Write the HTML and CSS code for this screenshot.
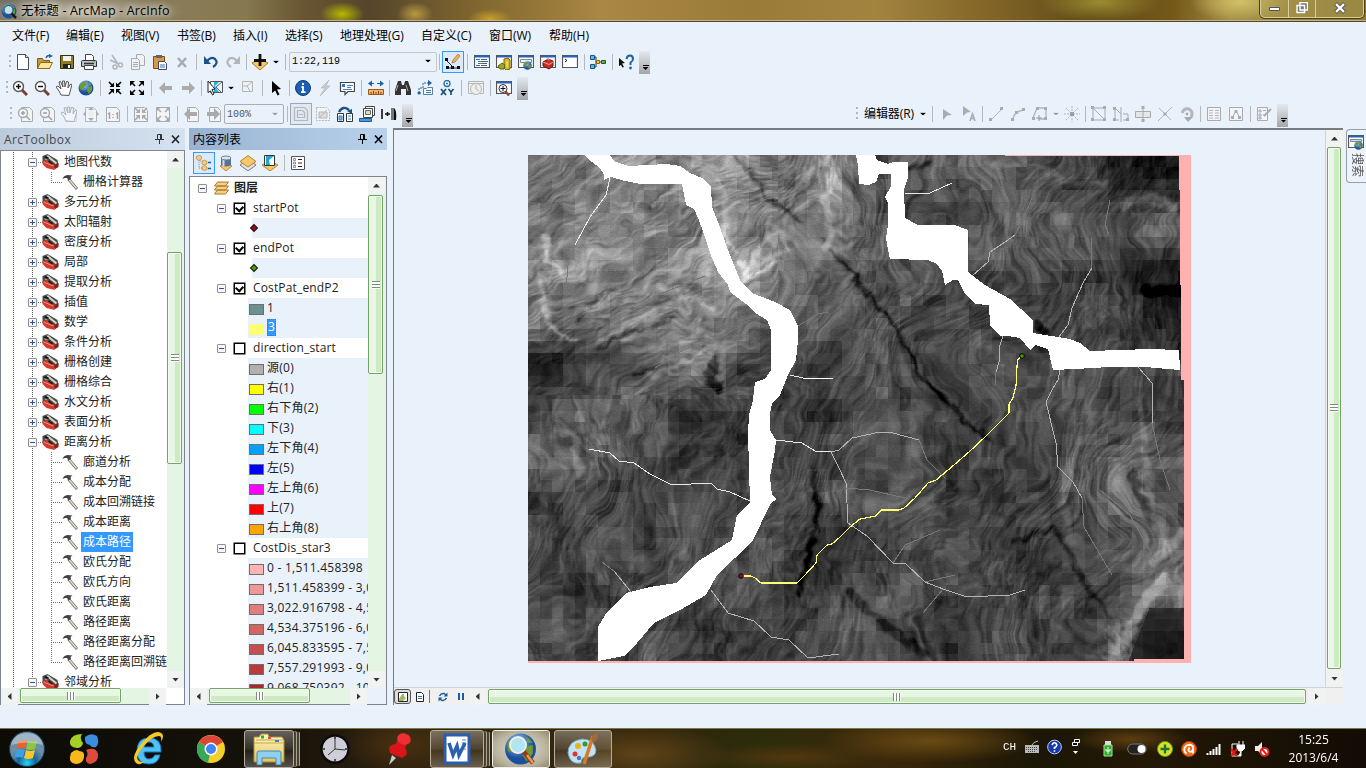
FILE: index.html
```html
<!DOCTYPE html>
<html lang="zh-CN">
<head>
<meta charset="utf-8">
<title>无标题 - ArcMap - ArcInfo</title>
<link rel="stylesheet" href="styles.css">
</head>
<body>
<svg class="defs" width="0" height="0">
  <defs>
    <radialGradient id="gGlobe" cx=".4" cy=".3"><stop offset="0" stop-color="#9fd0f5"/><stop offset="1" stop-color="#1b4f9c"/></radialGradient>
    <radialGradient id="gOrb" cx=".5" cy=".9"><stop offset="0" stop-color="#28d4f8"/><stop offset=".5" stop-color="#17659d"/><stop offset="1" stop-color="#6d8ea5"/></radialGradient>
    <linearGradient id="gFold" x1="0" y1="0" x2="0" y2="1"><stop offset="0" stop-color="#fff7c4"/><stop offset="1" stop-color="#e3c45e"/></linearGradient>
  </defs>
  <symbol id="globe" viewBox="0 0 16 16"><circle cx="8" cy="8" r="7.5" fill="url(#gGlobe)"/><path d="M2 5q3-4 6-3l1 3-3 2-1 3-3-1zM10 7l4-1v4l-3 4-2-3zM11 2l3 3-3 0z" fill="#6f9a35"/></symbol>
  <symbol id="box" viewBox="0 0 16 16"><path d="M0 2 5 0l10 6 1 5-4 3-6-2L0 8z" fill="#4a4a4a"/><path d="m0 7 4-.5 8 4.500v5l-8-2-4-4z" fill="#d23a2c"/><path d="m1 8 10 4" stroke="#f28b7a"/><path d="m12 11 4-2v4l-4 2.500z" fill="#8e1e18"/><path d="m5 2 9 7.500" stroke="#ddd6c6" stroke-width="2"/><path d="m2 3 4 1M6 7l4 3" stroke="#161616" stroke-width="1.500"/><path d="M2 5l3 1M4 1l2 .5" stroke="#a5a5a5"/></symbol>
  <symbol id="ham" viewBox="0 0 16 16"><path d="m6 5 8.500 10" stroke="#6b665a" stroke-width="2.800"/><path d="m6.500 5.500 7.600 9" stroke="#e6dec8" stroke-width="1.500"/><path d="M0 5q1-3.500 5-4l5 .5-2 1.500.5 2L6 6.500 4.500 4Q2 3.500 0 5z" fill="#444"/></symbol>
  <symbol id="mag" viewBox="0 0 16 16"><path d="m10 10 5 5" stroke="#7b3f35" stroke-width="3"/><circle cx="6.500" cy="6.500" r="5" fill="#fff" stroke="#555" stroke-width="1.400"/></symbol>
  <symbol id="hand" viewBox="0 0 16 16"><path d="m5 15-2-4-3-4 2-1 3 3-2-7 1.500-.5L7 7 6.500 1h2L9 7l1.500-5.500 2 .5L12 8l2.500-4 1.500.5L14 12l-1 3.500z" fill="#fff" stroke="#555"/></symbol>
  <symbol id="win" viewBox="0 0 16 16"><path d="M.5 1.500h15v12H.5z" fill="#fff" stroke="#555" stroke-width="1.200"/><path d="M1 2.500h14" stroke="#2463b8" stroke-width="2"/></symbol>
  <symbol id="in4" viewBox="0 0 16 16"><path d="M2 2l4 4M14 2l-4 4M2 14l4-4M14 14l-4-4" stroke="currentColor" stroke-width="1.700"/><path d="M7 2.500V7H2.500zM9 2.500V7h4.500zM7 13.500V9H2.500zM9 13.500V9h4.500z" fill="currentColor"/></symbol>
  <symbol id="out4" viewBox="0 0 16 16"><path d="M2 2l4 4M14 2l-4 4M2 14l4-4M14 14l-4-4" stroke="currentColor" stroke-width="1.500"/><path d="M1 6V1h5zM15 6V1h-5zM1 10v5h5zM15 10v5h-5z" fill="currentColor"/></symbol>
  <symbol id="page" viewBox="0 0 16 16"><path d="M4.500 1.500h8l3 3v11h-11z" fill="#f2f4f7" stroke="#a9abad"/></symbol>
  <symbol id="left" viewBox="0 0 16 16"><path d="M1 8 7 2v4h7v4H7v4z" fill="#a8aaac"/></symbol>
  <symbol id="right" viewBox="0 0 16 16"><path d="M15 8 9 2v4H2v4h7v4z" fill="#a8aaac"/></symbol>
  <symbol id="ptr" viewBox="0 0 16 16"><path d="m4 1 9 8-4 .5 2.500 5-2 1-2.300-5L4 13z" fill="currentColor"/></symbol>
</svg>

<header class="title">
  <svg class="appicon" viewBox="0 0 16 16"><use href="#globe"/><path d="m10 10 5 5" stroke="#181818" stroke-width="2.500"/><circle cx="7.500" cy="7" r="4.500" fill="#d9f2ff" fill-opacity=".8" stroke="#0c4b78"/></svg>
  <span class="title-text">无标题 - ArcMap - ArcInfo</span>
  <div class="winbtns">
    <span class="wb"><svg width="12" height="12"><path d="M1.500 5.500h10v3h-10z" fill="#fff" stroke="#555"/></svg></span>
    <span class="wb"><svg width="12" height="12"><path d="M4 .5h7.500V8H4zM1 3.500h7.500v7H1z" fill="#777" stroke="#fff" stroke-width="1.400"/></svg></span>
    <span class="wb wide"><svg width="12" height="12"><path d="m1.500 1.500 9 9m0-9-9 9" stroke="#555" stroke-width="4"/><path d="m2 2 8 8m0-8-8 8" stroke="#fff" stroke-width="2.400"/></svg></span>
  </div>
</header>

<nav class="menu">
  <span class="m1">文件(F)</span><span class="m2">编辑(E)</span><span class="m3">视图(V)</span><span class="m4">书签(B)</span><span class="m5">插入(I)</span><span class="m6">选择(S)</span><span class="m7">地理处理(G)</span><span class="m8">自定义(C)</span><span class="m9">窗口(W)</span><span>帮助(H)</span>
</nav>

<div class="bar bar1">
  <i class="grip"></i>
  <svg class="i" viewBox="0 0 16 16"><path d="M2.500.5h8l3 3v12h-11z" fill="#fff" stroke="#4a4f55"/><path d="M10.500.5v3h3" fill="#cfe0f4" stroke="#4a4f55"/></svg>
  <svg class="i" viewBox="0 0 16 16"><path d="M.5 14.500v-10h5l1 2h6v8z" fill="#c59b3a" stroke="#7a5c17"/><path d="m.5 14.500 3-6h12l-3 6z" fill="#ffe69b" stroke="#8a6a1d"/><path d="M9 4q1-3 4-2.500" fill="none" stroke="#1c62a5" stroke-width="1.500"/><path d="m12 0 4 2-4 2z" fill="#1c62a5"/></svg>
  <svg class="i" viewBox="0 0 16 16"><path d="M1.500 1.500h13v13h-13z" fill="#8c7a1c" stroke="#33300f"/><path d="M4 2h8v5H4z" fill="#f1f1f1"/><path d="M4 10h8v4H4z" fill="#222"/><path d="M9 11h2v3H9z" fill="#fff"/></svg>
  <svg class="i" viewBox="0 0 16 16"><path d="M4.500 7V.5h6l2 2V7" fill="#fff" stroke="#444"/><path d="M.5 7.500q0-1 1-1h13q1 0 1 1v5H.5z" fill="#bfc2c5" stroke="#333"/><path d="M3 9.500h10" stroke="#333" stroke-width="1.500"/><path d="M3.500 11.500h9v4h-9z" fill="#fff" stroke="#444"/><path d="M12 8h2" stroke="#4c4"/></svg>
  <i class="sep s5"></i>
  <svg class="i" viewBox="0 0 16 16" fill="none" stroke="#b4b6b8" stroke-width="1.600"><path d="M4 1l6 9M2 6l9 4"/><circle cx="7" cy="13" r="2"/><circle cx="12.500" cy="11" r="2"/></svg>
  <svg class="i" viewBox="0 0 16 16"><path d="M6.500.5h6l2 2v9h-8z" fill="#eef1f5" stroke="#a9abad"/><path d="M1.500 4.500h6l2 2v9h-8z" fill="#eef1f5" stroke="#a9abad"/><path d="M3 8.500h5M3 10.500h5M3 12.500h5" stroke="#a9abad"/></svg>
  <svg class="i" viewBox="0 0 16 16"><path d="M1.500 2.500h11v12h-11z" fill="#d79a4a" stroke="#7a4d16"/><path d="M4 1h6v3H4z" fill="#666"/><path d="M6.500 7.500h6l2 2v6h-8z" fill="#fff" stroke="#446"/><path d="M8 11h5M8 13h5" stroke="#2d6cb5"/></svg>
  <svg class="i" viewBox="0 0 16 16"><path d="m4 4 8 9M12 4l-8 9" stroke="#a9abad" stroke-width="2.500"/></svg>
  <i class="sep s7"></i>
  <svg class="i" viewBox="0 0 16 16"><path d="M4 7q4-5 8-2 4 4-2 8" fill="none" stroke="#1b5187" stroke-width="2.200"/><path d="M1 2v8h7z" fill="#1b5187"/></svg>
  <svg class="i" viewBox="0 0 16 16"><path d="M12 7Q8 2 4 5q-4 4 2 8" fill="none" stroke="#b3b6b9" stroke-width="2.200"/><path d="M15 2v8H8z" fill="#b3b6b9"/></svg>
  <i class="sep s5"></i>
  <svg class="i" viewBox="0 0 16 16"><path d="m0 9 8-4 8 4-8 7z" fill="#f5c96b" stroke="#a77a28"/><path d="M8 0v12M2 6.500h12" stroke="#111" stroke-width="2.800"/></svg>
  <i class="dd w10"></i><i class="sep s8"></i>
  <span class="combo scale">1:22,119<i class="dd"></i></span>
  <i class="sep s5"></i>
  <span class="btn"><svg class="i" viewBox="0 0 16 16"><path d="m1 6 6 6M2 14h13" stroke="#222" fill="none"/><path d="M0 4h3v3H0zM1 12h3v3H1zM6 12h3v3H6zM12 12h3v3h-3z" fill="#111"/><path d="m7 9 1-3 5-6 2 2-5 6z" fill="#f1b35a" stroke="#8a5a20" stroke-width=".6"/></svg></span>
  <i class="sep s7"></i>
  <svg class="i" viewBox="0 0 16 16"><use href="#win"/><path d="M2 5.500h4M4 7.500h3M4 9.500h3M2 11.500h4" stroke="#1a75c8"/><path d="M7 5.500h6M8 7.500h6M8 9.500h5M7 11.500h6" stroke="#43618a"/><path d="M6 7.500h2" stroke="#d33"/><path d="M6 9.500h2" stroke="#3a3"/></svg>
  <svg class="i" viewBox="0 0 16 16"><use href="#win"/><path d="M8 5l4-1 2 2v9l-4 1-2-2z" fill="#d6b918" stroke="#7a6808"/><path d="m2 12 4-3 3 2-1 4-4 0z" fill="#9aa635" stroke="#5c6412"/><path d="M11 7v6" stroke="#fff3a0"/></svg>
  <svg class="i" viewBox="0 0 16 16"><use href="#win"/><path d="M2.500 5.500h11v3h-11z" fill="#eee" stroke="#888"/><svg x="5" y="7" width="9" height="9"><use href="#globe"/></svg></svg>
  <svg class="i" viewBox="0 0 16 16"><use href="#win"/><path d="m3 8 5-3 5 2v5l-4 3-6-3z" fill="#c62d25" stroke="#6a100c"/><path d="m3 8 6 2.500L13 8M6 5h3v1.500" fill="none" stroke="#f3a196"/></svg>
  <svg class="i" viewBox="0 0 16 16"><use href="#win"/><path d="m3 5 2 1.500L3 8" fill="none" stroke="#222"/></svg>
  <i class="sep s6"></i>
  <svg class="i" viewBox="0 0 16 16"><path d="M4 3h2v10H4M6 8h6" fill="none" stroke="#333"/><path d="M.5 1.500h4v4h-4zM.5 10.500h4v4h-4z" fill="#58b8e8" stroke="#17548c"/><path d="M6.500 6.500h3v3h-3z" fill="#f2c94c" stroke="#8b641a"/><path d="M11.500 6.500h4v3h-4z" fill="#5eb04b" stroke="#245b1a"/></svg>
  <i class="sep s6"></i>
  <svg class="i" viewBox="0 0 16 16"><path d="m1 4 6 5-3 .5L6 13l-1.500.5L3 11l-2 1z" fill="#111"/><path d="M8.500 5Q9 1.500 12 1.500T15 5q0 2-2.500 3.500V11" fill="none" stroke="#21639e" stroke-width="2"/><circle cx="12.500" cy="14" r="1.400" fill="#21639e"/></svg>
  <i class="more"></i>
</div>

<div class="bar bar2">
  <i class="grip"></i>
  <svg class="i" viewBox="0 0 16 16"><use href="#mag"/><path d="M6.500 4v5M4 6.500h5" stroke="#111" stroke-width="1.500"/></svg>
  <svg class="i" viewBox="0 0 16 16"><use href="#mag"/><path d="M4 6.500h5" stroke="#111" stroke-width="1.500"/></svg>
  <svg class="i" viewBox="0 0 16 16"><use href="#hand"/></svg>
  <svg class="i" viewBox="0 0 16 16"><use href="#globe"/></svg>
  <i class="sep s7"></i>
  <svg class="i" viewBox="0 0 16 16"><use href="#in4"/></svg>
  <svg class="i" viewBox="0 0 16 16"><use href="#out4"/></svg>
  <i class="sep s7"></i>
  <svg class="i" viewBox="0 0 16 16"><use href="#left"/></svg>
  <svg class="i" viewBox="0 0 16 16"><use href="#right"/></svg>
  <i class="sep s5"></i>
  <svg class="i" viewBox="0 0 16 16"><path d="M3.500 1.500h12v11h-12z" fill="#eef6fb" stroke="#556"/><path d="M7 2h5l-4 4 4 6H7z" fill="#27b3dc"/><path d="M15 2 9 7l5 5" fill="none" stroke="#667"/><path d="m1 1 7 8-3 .5 2 4.500-1.500 1-2-4L1 12.500z" fill="#fff" stroke="#222"/></svg>
  <i class="dd w11"></i>
  <svg class="i" viewBox="0 0 16 16"><path d="M2.500 1.500h10v10h-10z" fill="#eef1f5" stroke="#b4b6b8"/><path d="m12 2-5 4 3 5M7 6H3" stroke="#b4b6b8" fill="none"/></svg>
  <i class="sep s6"></i>
  <svg class="i" viewBox="0 0 16 16"><use href="#ptr"/></svg>
  <i class="sep s5"></i>
  <svg class="i" viewBox="0 0 16 16"><circle cx="8" cy="8" r="7.500" fill="#1c5fb4" stroke="#0d3b7c"/><path d="M8 3v2M6.500 7H8v5M6 12.200h4.500" stroke="#fff" stroke-width="1.800" fill="none"/></svg>
  <svg class="i" viewBox="0 0 16 16"><path d="M12 0 4 8h4l-5 8 10-10H9z" fill="#c9cbcd" stroke="#b0b2b4" stroke-width=".6"/></svg>
  <svg class="i" viewBox="0 0 16 16"><path d="M1.500 2.500h14v9H9l-3 3v-3H1.500z" fill="#fff" stroke="#444" stroke-width="1.200"/><path d="M3 4h3v3H3z" fill="#297bc5"/><path d="M8 5.500h6M8 7.500h4M4 9.500h9" stroke="#4d83bb"/></svg>
  <i class="sep s7"></i>
  <svg class="i" viewBox="0 0 16 16"><path d="M1 3.500h14" stroke="#1b62a8" stroke-dasharray="5 3"/><path d="m0 3.500 4-3v6zM16 3.500l-4-3v6z" fill="#1b62a8"/><path d="M.5 9.500h15v5H.5z" fill="#f7b66c" stroke="#9b5a1c"/><path d="M3 12v2M5.500 11v3M8 12v2M10.500 11v3M13 12v2" stroke="#7b4413"/></svg>
  <i class="sep s5"></i>
  <svg class="i" viewBox="0 0 16 16"><path d="M3 1h3l1 4h2l1-4h3l3 9v5h-5V9H6v6H0v-5z" fill="#333"/><path d="m3 5-2 6M11 5l2 6" stroke="#aaa"/></svg>
  <svg class="i" viewBox="0 0 16 16"><path d="M2 13V8h4V3h6M2 13h3" fill="none" stroke="#1b62a8" stroke-dasharray="2 1"/><path d="m11 0 4 3-4 3z" fill="#1b62a8"/><path d="M6.500 8.500h3l1-1h5v7h-9z" fill="#f2f7fb" stroke="#647d94"/><path d="M9 10.500h5M9 12.500h5" stroke="#2d84c3"/><circle cx="2" cy="13" r="1.500" fill="#1b62a8"/></svg>
  <svg class="i" viewBox="0 0 16 16"><circle cx="8" cy="3.500" r="3" fill="#fff" stroke="#2d6da6" stroke-width="1.400"/><circle cx="8" cy="3.500" r="1" fill="#2d6da6"/><path d="m2 9 5 6M7 9l-5 6M9.500 9l2.500 3 2.500-3M12 12v3" stroke="#174f83" stroke-width="1.700" fill="none"/></svg>
  <i class="sep s7"></i>
  <svg class="i" viewBox="0 0 16 16"><path d="M.5 1.500h15v12H.5zM1 3.500h14" fill="#eef0f2" stroke="#b4b6b8"/><circle cx="8" cy="9" r="5.500" fill="#eee" stroke="#b4b6b8"/><path d="M8 5v4l3 2" stroke="#b4b6b8" fill="none"/></svg>
  <i class="sep s6"></i>
  <svg class="i" viewBox="0 0 16 16"><use href="#win"/><path d="m9 11 4 4.500" stroke="#8c4438" stroke-width="2.400"/><circle cx="7" cy="8.500" r="4" fill="#fff" stroke="#333"/><path d="M7 6v5M4.500 8.500h5" stroke="#111"/></svg>
  <i class="more"></i>
</div>

<div class="bar bar3">
  <i class="grip"></i>
  <div class="dim">
    <svg class="i" viewBox="0 0 16 16"><use href="#page"/><circle cx="6" cy="7" r="4.500" fill="#f2f4f7" stroke="#a9abad" stroke-width="1.400"/><path d="m9 10 4 4M6 5v4M4 7h4" stroke="#a0a2a4" stroke-width="1.500"/></svg>
    <svg class="i" viewBox="0 0 16 16"><use href="#page"/><circle cx="6" cy="7" r="4.500" fill="#f2f4f7" stroke="#a9abad" stroke-width="1.400"/><path d="m9 10 4 4M4 7h4" stroke="#a0a2a4" stroke-width="1.500"/></svg>
    <svg class="i light" viewBox="0 0 16 16"><use href="#page"/><use href="#hand"/></svg>
    <svg class="i" viewBox="0 0 16 16"><path d="M2.500 1.500h8l3 3v11h-11z" fill="#f2f4f7" stroke="#b4b6b8"/><path d="m8 1 3 3H5zM8 15l3-3H5zM0 8l3-3v6zM16 8l-3-3v6z" fill="#a9abad"/><circle cx="8" cy="8" r="3" fill="#eceff2"/></svg>
    <svg class="i" viewBox="0 0 16 16"><path d="M1.500 1.500h10l3 3v11h-13z" fill="#f2f4f7" stroke="#a9abad"/><path d="m3 8 1.500-1v6M11 8l1.500-1v6M8 8v1M8 11v1" stroke="#a0a2a4" stroke-width="1.400" fill="none"/></svg>
    <i class="sep s6"></i>
    <svg class="i" viewBox="0 0 16 16"><path d="M1.500 1.500h10l3 3v11h-13z" fill="#f2f4f7" stroke="#a9abad"/><use href="#in4"/></svg>
    <svg class="i" viewBox="0 0 16 16"><path d="M1.500 1.500h10l3 3v11h-13z" fill="#f2f4f7" stroke="#a9abad"/><use href="#out4"/></svg>
    <i class="sep s6"></i>
    <svg class="i" viewBox="0 0 16 16"><use href="#page"/><use href="#left"/></svg>
    <svg class="i" viewBox="0 0 16 16"><use href="#page"/><use href="#right"/></svg>
  </div>
  <span class="combo pct">100%<i class="dd gray"></i></span>
  <i class="sep s6"></i>
  <span class="btn off"><svg class="i" viewBox="0 0 16 16"><path d="M1.500 1.500h10l3 3v10h-13zM4.500 4.500h5l2 2v5h-7zM6 8.500h4" fill="none" stroke="#b4b6b8" stroke-width="1.200"/></svg></span>
  <svg class="i" viewBox="0 0 16 16"><path d="M1.500 1.500h10l3 3v10h-13z" fill="#f2f4f7" stroke="#b4b6b8" stroke-dasharray="2 1"/><path d="m4 12 8-8M4 6h8v6H4z" stroke="#b4b6b8" fill="#ddd"/></svg>
  <svg class="i" viewBox="0 0 16 16"><path d="M2 6q4-7 10-2" fill="none" stroke="#1b5187" stroke-width="2.400"/><path d="m10 5 5-2v5z" fill="#1b5187"/><path d="M.5 7.500h6v8h-6zM9.500 7.500h6v8h-6z" fill="#fff" stroke="#333"/><path d="M2 10h3v4H2zM11 10h3M11 13h3" stroke="#3787b8" fill="#9ac"/></svg>
  <svg class="i" viewBox="0 0 16 16"><path d="M6.500.5h9v9h-9z" fill="#fff" stroke="#444"/><path d="M4.500 2.500h9v9h-9z" fill="#fff" stroke="#444"/><path d="M6.500 4.500h5v4h-5z" fill="#d5e3a8" stroke="#667"/><path d="M.5 12.500h12v3H.5z" fill="#4a99df" stroke="#215b91"/></svg>
  <svg class="i" viewBox="0 0 16 16"><path d="M1 3v10M4 8h5M6.500 6v4" stroke="#111" stroke-width="1.600"/><path d="M10 2h3v12h-3z" fill="#777"/><path d="M13 2q3 2 2 12h-2z" fill="#111"/></svg>
  <i class="more"></i>
  <div class="editor">
    <i class="grip"></i><span class="ed-label">编辑器(R)</span><i class="dd w10"></i><i class="sep s7"></i>
    <svg class="i" viewBox="0 0 16 16"><path d="m4 3 9 6-5 .5L4 14z" fill="#a9abad"/></svg>
    <svg class="i" viewBox="0 0 16 16"><path d="m2 0 8 6-4 .5L2 10z" fill="#a9abad"/><path d="m9 15 2.500-7 2.500 7M10 12.500h4" stroke="#a9abad" stroke-width="1.600" fill="none"/></svg>
    <i class="sep s5"></i>
    <svg class="i" viewBox="0 0 16 16"><path d="M3 14 14 3" stroke="#b4b6b8"/><path d="M1 12h3v3H1zM12 1h3v3h-3z" fill="#a9abad"/></svg>
    <svg class="i" viewBox="0 0 16 16"><path d="M3 13Q4 6 13 4" stroke="#b4b6b8" fill="none" stroke-width="1.400"/><path d="M1 12h3v3H1zM5 5h3v3H5zM12 2h3v3h-3z" fill="#a9abad"/></svg>
    <svg class="i" viewBox="0 0 16 16"><path d="M1 12 5 2h9v11H7" stroke="#b4b6b8" fill="none" stroke-width="1.300"/><path d="M4 1h3v3H4zM12 1h3v3h-3zM12 11h3v3h-3zM0 11h3v3H0z" fill="#a9abad"/><path d="M7 9v6M4 12h6" stroke="#999"/></svg>
    <i class="dd gray w10"></i>
    <svg class="i" viewBox="0 0 16 16"><path d="M8 0v16M0 8h16M2 2l12 12M14 2 2 14" stroke="#b4b6b8" stroke-dasharray="2 1"/><path d="M6 6h4v4H6z" fill="#9c9ea0"/></svg>
    <i class="sep s5"></i>
    <svg class="i" viewBox="0 0 16 16"><path d="M2 2v12h12zM2 2h12v12" stroke="#a9abad" fill="none"/><path d="M0 0h3v3H0zM0 12h3v3H0zM12 12h3v3h-3zM12 0h3v3h-3z" fill="#a9abad"/></svg>
    <svg class="i" viewBox="0 0 16 16"><path d="M2 2v12h4M2 2l6 6M8 1v15M10 8h5v6h-5" stroke="#a9abad" fill="none"/><path d="M0 1h3v3H0zM0 12h3v3H0zM13 12h3v3h-3z" fill="#a9abad"/></svg>
    <svg class="i" viewBox="0 0 16 16"><path d="M.5 5.500h15v6H.5zM8 0v16" fill="#e4e7ea" stroke="#a9abad"/><path d="M6.500 0h3v3h-3zM6.500 13h3v3h-3z" fill="#a9abad"/></svg>
    <svg class="i" viewBox="0 0 16 16"><path d="M1 15 15 1M2 2l12 12" stroke="#b4b6b8"/><path d="M6.500 6.500h3v3h-3z" fill="#a9abad"/></svg>
    <svg class="i" viewBox="0 0 16 16"><path d="M3 7q2-5 7-4 5 3 2 8" stroke="#b4b6b8" fill="none" stroke-width="3"/><path d="M5 11h9l-5 5z" fill="#a9abad"/><circle cx="8" cy="8" r="1.400" fill="#a9abad"/></svg>
    <i class="sep s5"></i>
    <svg class="i" viewBox="0 0 16 16"><path d="M1.500 1.500h13v13h-13z" fill="#f2f4f7" stroke="#a9abad"/><path d="M3 4.500h4M3 7h4M3 9.500h4M3 12h4M9 4.500h4M9 7h4M9 9.500h4M9 12h4" stroke="#b4b6b8"/></svg>
    <svg class="i" viewBox="0 0 16 16"><path d="M1.500 1.500h13v13h-13z" fill="#f2f4f7" stroke="#a9abad"/><path d="m4 12 4-7 4 7" fill="none" stroke="#a9abad"/><path d="M3 10h3v3H3zM6.500 4h3v3h-3zM10 10h3v3h-3z" fill="#a9abad"/></svg>
    <i class="sep s6"></i>
    <svg class="i" viewBox="0 0 16 16"><path d="M1.500 1.500h10v13h-10z" fill="#f2f4f7" stroke="#a9abad"/><path d="M3 4h2v2H3zM3 8h2v2H3zM3 11h2v2H3zM7 4.500h3M7 9h3" stroke="#a9abad" fill="none"/><path d="m8 10 7-7" stroke="#a9abad" stroke-width="2"/></svg>
    <i class="more"></i>
  </div>
</div>

<main class="work">
  <section class="panel toolbox">
    <div class="phead">ArcToolbox<span class="pctl"><svg width="9" height="11"><path d="M2.500.5h4v5h-4zM0 5.500h9M4.500 6v4M5.500 1v4" fill="none" stroke="#333"/></svg><svg width="9" height="11"><path d="m1 1.500 7 7.500m0-7.500L1 9" stroke="#222" stroke-width="1.600"/></svg></span></div>
    <div class="frame">
      <div class="upper">
        <ul class="tree">
          <li class="g"><i class="pm"></i><svg><use href="#box"/></svg>地图代数</li>
          <li class="t end"><svg><use href="#ham"/></svg><b>栅格计算器</b></li>
          <li class="g"><i class="pm plus"></i><svg><use href="#box"/></svg>多元分析</li>
          <li class="g"><i class="pm plus"></i><svg><use href="#box"/></svg>太阳辐射</li>
          <li class="g"><i class="pm plus"></i><svg><use href="#box"/></svg>密度分析</li>
          <li class="g"><i class="pm plus"></i><svg><use href="#box"/></svg>局部</li>
          <li class="g"><i class="pm plus"></i><svg><use href="#box"/></svg>提取分析</li>
          <li class="g"><i class="pm plus"></i><svg><use href="#box"/></svg>插值</li>
          <li class="g"><i class="pm plus"></i><svg><use href="#box"/></svg>数学</li>
          <li class="g"><i class="pm plus"></i><svg><use href="#box"/></svg>条件分析</li>
          <li class="g"><i class="pm plus"></i><svg><use href="#box"/></svg>栅格创建</li>
          <li class="g"><i class="pm plus"></i><svg><use href="#box"/></svg>栅格综合</li>
          <li class="g"><i class="pm plus"></i><svg><use href="#box"/></svg>水文分析</li>
          <li class="g"><i class="pm plus"></i><svg><use href="#box"/></svg>表面分析</li>
          <li class="g"><i class="pm"></i><svg><use href="#box"/></svg>距离分析</li>
          <li class="t"><svg><use href="#ham"/></svg><b>廊道分析</b></li>
          <li class="t"><svg><use href="#ham"/></svg><b>成本分配</b></li>
          <li class="t"><svg><use href="#ham"/></svg><b>成本回溯链接</b></li>
          <li class="t"><svg><use href="#ham"/></svg><b>成本距离</b></li>
          <li class="t"><svg><use href="#ham"/></svg><b class="sel">成本路径</b></li>
          <li class="t"><svg><use href="#ham"/></svg><b>欧氏分配</b></li>
          <li class="t"><svg><use href="#ham"/></svg><b>欧氏方向</b></li>
          <li class="t"><svg><use href="#ham"/></svg><b>欧氏距离</b></li>
          <li class="t"><svg><use href="#ham"/></svg><b>路径距离</b></li>
          <li class="t"><svg><use href="#ham"/></svg><b>路径距离分配</b></li>
          <li class="t end"><svg><use href="#ham"/></svg><b>路径距离回溯链接</b></li>
          <li class="g"><i class="pm"></i><svg><use href="#box"/></svg>邻域分析</li>
        </ul>
        <div class="vs"><i class="ar up"></i><i class="thumb tb-v"></i><i class="ar down"></i></div>
      </div>
      <div class="hs"><i class="ar lf"></i><i class="thumb tb-h"></i><i class="ar rt"></i></div>
    </div>
  </section>

  <section class="panel toc">
    <div class="phead active">内容列表<span class="pctl"><svg width="9" height="11"><path d="M2.500.5h4v5h-4zM0 5.500h9M4.500 6v4M5.500 1v4" fill="none" stroke="#000"/></svg><svg width="9" height="11"><path d="m1 1.500 7 7.500m0-7.500L1 9" stroke="#000" stroke-width="1.600"/></svg></span></div>
    <div class="toctools">
      <span class="btn"><svg class="i" viewBox="0 0 16 16"><path d="M3 5v8h3M4 6h5" stroke="#888" fill="none" stroke-dasharray="1 1"/><path d="M12 7.500h3M12 13.500h3" stroke="#16639f" stroke-width="1.500"/><path d="m3 0 2.500 1.500v2.500L3 5.500.5 4V1.500zM8.500 5 11 6.500V9L8.500 10 6 9V6.500zM8.500 10.500 11 12v2.500l-2.500 1-2.500-1V12z" fill="#f2cf85" stroke="#b98d3c" stroke-width=".8"/></svg></span>
      <svg class="i" viewBox="0 0 16 16"><path d="m2 11 6 5 6-5-6-2z" fill="#f5c96b" stroke="#c18c2e"/><path d="M3 3v7q5 3 10 0V3z" fill="#587296"/><path d="M5.500 4v7" stroke="#cfe0f2" stroke-width="2"/><ellipse cx="8" cy="3" rx="5" ry="2" fill="#dce6f2" stroke="#6c7f96"/></svg>
      <svg class="i" viewBox="0 0 16 16"><path d="m0 10 8-5 8 5-8 6z" fill="#e3e4e6" stroke="#777"/><path d="m0 6.500 8-6 8 6-8 5.500z" fill="#f5c96b" stroke="#b58027"/></svg>
      <svg class="i" viewBox="0 0 16 16"><path d="m0 10 8-4 8 4-8 6z" fill="#f5c96b" stroke="#b58027"/><path d="M2.500.5h10v10h-10z" fill="#fff" stroke="#333"/><path d="M12 1 7 5l1 5H4V1z" fill="#1aa7d0"/></svg>
      <i class="sep s6"></i>
      <svg class="i" viewBox="0 0 16 16"><path d="M1.500 1.500h13v13h-13z" fill="#fff" stroke="#555"/><path d="M8 4.500h4M8 8h4M8 11.500h4" stroke="#222"/><path d="M3.500 3.500h2v2h-2zM3.500 7h2v2h-2zM3.500 10.500h2v2h-2z" fill="none" stroke="#777" stroke-width=".8"/></svg>
    </div>
    <div class="frame">
      <div class="upper">
        <ul class="layers">
          <li class="root"><i class="pm"></i><svg viewBox="0 0 16 16"><path d="m1 14 3-4h11l-3 4zM1 10l3-4h11l-3 4zM1 6l3-4h11l-3 4z" fill="#f5cf85" stroke="#a87b2b"/></svg>图层</li>
          <li class="ly"><i class="pm"></i><i class="ck on"></i>startPot</li>
          <li class="pt"><i class="dot red"></i></li>
          <li class="ly"><i class="pm"></i><i class="ck on"></i>endPot</li>
          <li class="pt"><i class="dot green"></i></li>
          <li class="ly"><i class="pm"></i><i class="ck on"></i>CostPat_endP2</li>
          <li class="lg"><i style="background:#6a9190"></i>1</li>
          <li class="lg nob"><i style="background:#ffff73"></i><b class="sel">3</b></li>
          <li class="ly"><i class="pm"></i><i class="ck"></i>direction_start</li>
          <li class="lg"><i style="background:#b0b0b0"></i>源(0)</li>
          <li class="lg"><i style="background:#ffff00"></i>右(1)</li>
          <li class="lg"><i style="background:#00ff00"></i>右下角(2)</li>
          <li class="lg"><i style="background:#00ffff"></i>下(3)</li>
          <li class="lg"><i style="background:#00a2ff"></i>左下角(4)</li>
          <li class="lg"><i style="background:#0000ff"></i>左(5)</li>
          <li class="lg"><i style="background:#ff00ff"></i>左上角(6)</li>
          <li class="lg"><i style="background:#ff0000"></i>上(7)</li>
          <li class="lg"><i style="background:#ffa500"></i>右上角(8)</li>
          <li class="ly"><i class="pm"></i><i class="ck"></i>CostDis_star3</li>
          <li class="lg"><i style="background:#ffb3b3"></i>0 - 1,511.458398</li>
          <li class="lg"><i style="background:#f09898"></i>1,511.458399 - 3,022.916797</li>
          <li class="lg"><i style="background:#e07e7e"></i>3,022.916798 - 4,534.375195</li>
          <li class="lg"><i style="background:#d46464"></i>4,534.375196 - 6,045.833594</li>
          <li class="lg"><i style="background:#c54e4e"></i>6,045.833595 - 7,557.291992</li>
          <li class="lg"><i style="background:#b83a3a"></i>7,557.291993 - 9,068.750391</li>
          <li class="lg"><i style="background:#a82828"></i>9,068.750392 - 10,580.20879</li>
        </ul>
        <div class="vs"><i class="ar up"></i><i class="thumb tc-v"></i><i class="ar down"></i></div>
      </div>
      <div class="hs"><i class="ar lf"></i><i class="thumb tb-h"></i><i class="ar rt"></i><i class="corner"></i></div>
    </div>
  </section>

  <section class="view">
    <div class="upper">
      <div class="canvas">
        <div class="mapbox">
          <canvas id="relief" width="663" height="508"></canvas>
          <svg class="vec" width="663" height="508" viewBox="528 155 663 508" shape-rendering="crispEdges">
            <g fill="#fff">
              <path d="M584 155L592 162 600 168 604 175V180L611 177 625 181 640 184H682L686 205 694 209 698 218 704 234 710 253 718 272 728 285 730 292 746 304 755 313 767 320 771 330V370L765 379 755 382 753 400 749 415 748 433 750 503 737 515 732 540 700 560 676 583 650 587 626 593 605 615 598 627V661L624 656 637 643 654 623 680 610 706 595 717 575 752 542 771 503 777 499 772 495 770 477 775 450 776 440 770 430V413L772 404 780 395 788 375 796 360 798 340V326L790 310 775 302 752 293 740 280 728 250 718 222 712 207 711 186 702 178 690 173 680 166 667 164 628 166 614 161 610 155Z"/>
              <path d="M856 155L858 165 859 184 869 185 876 182 879 174H891V186L885 197 888 203V225L886 238 889 255 890 259 928 260 937 264 942 271 945 285 953 280H958L965 294 975 304 989 305 990 325 1000 336H1008L1020 338 1030 350 1035 345 1048 349 1053 370 1075 369 1110 367H1145L1180 370 1179 350 1150 349 1090 351 1080 343 1070 339 1033 333V320L1010 299 985 285 968 272V230L955 225H918L905 218 904 190 908 178V162H893L888 164 877 160 875 155Z"/>
            </g>
            <g fill="none" stroke="#b4b4b4" stroke-width="1">
              <path stroke="#e8e8e8" d="M589 449L610 453 619 461 634 463 650 474 672 485 711 483 717 489 730 492 750 501M776 440L802 443 815 451 831 452M610 178L606 195 590 217 575 245M790 375L803 378H833M905 193H930L952 183"/>
              <path stroke="#fff" d="M803 378H830"/>
              <path d="M831 452L839 450 852 438 880 432 893 433 919 440M831 452L839 468 846 483 848 523 867 536 893 563 906 564 925 582 943 589 967 597 1010 595 1025 590M711 590L728 613 754 621 771 637 789 640 808 658 839 654M614 571L631 592M1060 370L1058 380 1052 390 1046 402 1056 443 1058 467 1073 482 1082 498M1138 367L1152 383V423M1059 337L1068 325 1072 308 1083 283 1092 268M972 276L988 262 990 252 1005 242 1015 235M1003 336L1000 345 999 362 996 372"/>
              <path stroke="#777" d="M1082 498L1084 527 1112 575M1092 268L1091 238M1109 235L1105 225 1110 200M996 372L995 385M919 440L927 460 945 478M943 589L923 613M791 311L812 287M798 326L818 314 828 312M655 368L683 350 725 335 750 320M617 320L655 296 705 276M575 245L568 265 566 290M846 488L870 490 905 498M1152 423L1160 460 1170 490M1100 490L1130 515 1155 560M602 562L614 571M1015 235L1022 222 1032 198M893 563L905 545 940 530M925 582L955 575"/>
            </g>
            <path d="M1022 356L1018 359 1017 366 1016 386 1013 398 1009 404V413L997 425 984 438 970 451 954 465 936 480 928 483 915 498 904 508 899 510H881L876 516 860 519 850 527 840 537 832 544 827 545 817 555 816 563 805 575 797 583H761L755 578 751 576H741" fill="none" stroke="#ffff73" stroke-width="1.200"/>
            <g shape-rendering="auto" stroke="#000"><circle cx="1022" cy="356" r="2.300" fill="#4a9a0a"/><circle cx="741" cy="576" r="2.300" fill="#a00824"/></g>
          </svg>
        </div>
      </div>
      <div class="vs wide"><i class="ar up"></i><i class="thumb mv"></i><i class="ar down"></i></div>
    </div>
    <div class="viewbar">
      <span class="vbtn"><svg width="10" height="10"><path d="M.5.5h9v9h-9z" fill="#fff" stroke="#222"/><path d="M1 7 4 2h2v2l2 2-3 3H1z" fill="#9cba6c"/></svg></span>
      <span class="vpage"><svg width="9" height="10"><path d="M.5.500h5l2 2v7h-7z" fill="#fff" stroke="#222"/><path d="M2 4.500h4M2 6.500h4" stroke="#2d72ad"/></svg></span>
      <i class="vsep"></i>
      <span class="vref"><svg width="10" height="10"><path d="M1.500 4Q3 1 6 1.500L8 3M8.500 6Q7 9 4 8.500L2 7" fill="none" stroke="#1b5ba0" stroke-width="1.500"/><path d="M9.500.5v4h-4zM.5 9.500v-4h4z" fill="#1b5ba0"/></svg></span>
      <span class="vpau"><i></i><i></i></span>
      <i class="ar lf"></i><i class="thumb mh"></i><i class="ar rt"></i>
    </div>
  </section>

  <aside class="search"><svg width="16" height="16" viewBox="0 0 16 16"><use href="#win"/><path d="M2.500 5.500h11v2h-11z" fill="#cde" stroke="#888"/><svg x="6" y="7" width="9" height="9"><use href="#globe"/></svg></svg><span>搜索</span></aside>
</main>

<footer class="task">
  <svg class="orb" width="38" height="38" viewBox="0 0 38 38"><circle cx="19" cy="19" r="17.500" fill="url(#gOrb)" stroke="#15384f"/><path d="M10 12q5-3 9-1l-2 8q-4-2-9 0z" fill="#e8632b"/><path d="M20 11q4 2 9 0l-2 8q-5 2-9 0z" fill="#8cc63e"/><path d="M8 20q4-2 9 0l-2 8q-4-2-9 0z" fill="#3c9fe0"/><path d="M18 20q4 2 9 0l-2 8q-5 2-9 0z" fill="#fbc62c"/><path d="M3 15Q6 3 19 3t16 12q-16-5-32 0z" fill="#fff" fill-opacity=".35"/></svg>
  <svg class="q1" width="32" height="40" viewBox="0 0 32 40"><path d="M14 5q-3 4 1 9-1 5-6 5-8-1-7-7 2-7 12-7z" fill="#a4cf27"/><path d="M17 8q6-5 12-1 3 7-1 11-5 1-6-2-6-1-5-8z" fill="#3b8de0"/><path d="M3 24q5-5 8-2 6 0 5 6-1 7-8 7-7-1-6-7z" fill="#f6b81a"/><path d="M18 21q10-4 12 4 1 8-8 10-5-1-4-6 3-4 0-8z" fill="#e04a3c"/></svg>
  <svg class="q2" width="32" height="40" viewBox="0 0 32 40"><path d="M27 26H22q-2 4-6 4-5 0-5-7h17q1-14-12-14-12 0-12 13t12 13q9 0 11-9zM11 18q1-5 5-5t5 5z" fill="#4ec1f5" stroke="#1878c0"/><path d="M3 34Q-3 28 9 14T28 4q4 2 0 9 1-6-2-6-7 0-16 11T6 32q3 2 7 0-7 5-10 2z" fill="#f8c924"/></svg>
  <svg class="q3" width="30" height="30" viewBox="0 0 30 30"><circle cx="15" cy="15" r="14" fill="#f7cf2b"/><path d="M15 15 3 8a14 14 0 0 1 24 0z" fill="#dc4437"/><path d="M15 15 3 8a14 14 0 0 0 9 21z" fill="#3aa757"/><path d="M15 8h12L20 4z" fill="#dc4437"/><circle cx="15" cy="15" r="6.500" fill="#fff"/><circle cx="15" cy="15" r="5" fill="#4285f4"/></svg>
  <span class="tbn stack t1"><svg width="32" height="32" viewBox="0 0 32 32"><path d="M1 29V4h5l2-3h7l1 3h13l2 3v22z" fill="url(#gFold)" stroke="#b08d34"/><path d="M1 10h30M3 7h27" stroke="#c9a74e"/><path d="M8 4h3" stroke="#1b3" stroke-width="3"/><path d="M15 5h3" stroke="#d53" stroke-width="2"/><path d="M22 8h4" stroke="#38c" stroke-width="2"/><path d="M4 32V20q0-2 2-2h20q2 0 2 2v12h-5v-7H9v7z" fill="#8fd0f0" stroke="#438cb4"/></svg></span>
  <svg class="q4" width="30" height="32" viewBox="0 0 30 32"><circle cx="15" cy="16" r="13.500" fill="#cfced8" stroke="#0b0b0b" stroke-width="2.400"/><path d="M15 16V6M15 16l-7 6M15 16l10 1" stroke="#333"/><path d="M15 4v2M15 26v2M3 16h2M25 16h2" stroke="#222" stroke-width="1.500"/></svg>
  <svg class="q5" width="28" height="36" viewBox="0 0 28 36"><path d="m6 24 4 3-7 7z" fill="#ccc"/><path d="M3 17q2-4 7-4l2-6 10 3-3 7q3 4 1 7l-4 3L4 22z" fill="#d9151b"/><ellipse cx="18" cy="8" rx="7" ry="5.500" transform="rotate(20 18 8)" fill="#f02f35"/></svg>
  <span class="tbn stack t2"><svg width="28" height="32" viewBox="0 0 28 32"><path d="M2 2h24v28H2z" fill="#fff" stroke="#2a5db0" stroke-width="3"/><path d="M19 7h4M19 10h4M19 13h4M19 16h4" stroke="#5d7fb8"/><path d="m6 10 4 12 4-9 2 9 6-12" fill="none" stroke="#2c5fad" stroke-width="3.500"/></svg></span>
  <span class="tbn hot"><svg width="34" height="34" viewBox="0 0 34 34"><svg width="33" height="34"><use href="#globe"/></svg><path d="m19 19 10 12" stroke="#8e3d14" stroke-width="4.500"/><path d="m23 23 6 8" stroke="#ec9852" stroke-width="2.500"/><circle cx="14" cy="13" r="8" fill="#b8edff" fill-opacity=".9" stroke="#eee" stroke-width="2"/></svg></span>
  <span class="tbn last"><svg width="34" height="34" viewBox="0 0 34 34"><path d="M16 7Q2 9 2 21q2 12 13 10 0-5 4-6 11 1 11-7Q28 7 16 7z" fill="#c3e2f2" stroke="#7aa8c2"/><circle cx="9" cy="22" r="2.500" fill="#d33"/><circle cx="12" cy="14" r="3" fill="#e8b320"/><circle cx="19" cy="12" r="2.500" fill="#2a9a3a"/><circle cx="13" cy="26" r="2.200" fill="#47c"/><path d="m27 4-9 28" stroke="#d87a24" stroke-width="3.500"/><path d="m25 8 2-6 5-2 0 6-4 5z" fill="#9c6a3c"/></svg></span>
  <div class="tray">
    <span class="ime">CH</span>
    <svg class="k1" width="16" height="16" viewBox="0 0 16 16"><path d="M1 6h14v8H1z" fill="#bbb"/><path d="M2 8.500h12M2 10.500h12M4 12.500h8" stroke="#444" stroke-dasharray="1 1"/><path d="M8 6q1-3 6-4" stroke="#bbb" fill="none"/></svg>
    <svg class="k2" width="15" height="16" viewBox="0 0 16 16"><circle cx="8" cy="8" r="7.300" fill="#1638b0" stroke="#cfd8ef"/><path d="M5.500 6Q6 3.500 8 3.500T10.500 6Q10 8 8 8.500V10M8 11.500v1.500" stroke="#fff" stroke-width="1.700" fill="none"/></svg>
    <svg class="k3" width="10" height="16" viewBox="0 0 10 16"><path d="M3.500.5h5v3h-5zM1.500 3.500h5v3h-5z" fill="#111" stroke="#fff"/><path d="M2 12h5l-2.500 3z" fill="#fff"/></svg>
    <svg class="k4" width="12" height="16" viewBox="0 0 12 16"><path d="M3 0h6v4H3z" fill="#ddd"/><path d="M2 4h8v11H2z" fill="#2eaa2a" stroke="#a8e49a"/><path d="M6 6v7M4 8v2h4V8" stroke="#fff" fill="none"/></svg>
    <svg class="k5" width="20" height="12" viewBox="0 0 20 12"><rect x=".7" y="1" width="18.500" height="10" rx="5" fill="#222" stroke="#777"/><circle cx="14.500" cy="6" r="4" fill="#fff"/></svg>
    <svg class="k6" width="16" height="16" viewBox="0 0 16 16"><circle cx="8" cy="8" r="7.500" fill="#e4dc22" stroke="#4aa52b"/><path d="M8 3.500v9M3.500 8h9" stroke="#15753a" stroke-width="2.400"/></svg>
    <svg class="k7" width="16" height="16" viewBox="0 0 16 16"><circle cx="8" cy="8" r="7.500" fill="#f06c1a" stroke="#b34106"/><path d="M5.500 12.500q-4-3-1-7 4-3.500 7.500 0v7M11.500 9q-1 2.500-3 1.500t0-4" stroke="#fff" fill="none" stroke-width="1.800"/></svg>
    <svg class="k8" width="16" height="12" viewBox="0 0 16 12"><path d="M1.500 10v2M4.500 8v4M7.500 6v6M10.500 4v8M13.500 1v11" stroke="#fff" stroke-width="2"/></svg>
    <svg class="k9" width="15" height="16" viewBox="0 0 15 16"><path d="M2 3h6M2 3v12h6" stroke="#fff" fill="none"/><path d="M9 0v4M13 0v4M7 4h8v3l-3 3H9L7 7zM11 10v5H8" fill="#fff" stroke="#fff"/><path d="m1 8 6 7M7 8l-6 7" stroke="#e11" stroke-width="2"/></svg>
    <svg class="k10" width="16" height="16" viewBox="0 0 16 16"><path d="M1 5h3l4-4v13l-4-4H1z" fill="#eee"/><circle cx="10.500" cy="11" r="4" fill="#fff" stroke="#d22" stroke-width="2"/><path d="m8 8 5 6" stroke="#d22" stroke-width="2"/></svg>
    <div class="clock">15:25<br>2013/6/4</div>
  </div>
</footer>
<script src="relief.js"></script>
</body>
</html>
```
FILE: styles.css
```css
*{box-sizing:border-box}
body{margin:0;width:1366px;height:768px;overflow:hidden;background:#e9f1fb;display:flex;flex-direction:column;font:12px/20px "Open Sans","Noto Sans CJK SC",sans-serif;color:#000}
i,b{font-style:normal;font-weight:400}
ul{list-style:none;margin:0;padding:0}
svg{display:block;flex:none}
.defs{position:absolute}
.title{height:22px;flex:none;display:flex;border-bottom:1px solid #57452a;box-shadow:inset 0 -1px #c3b28b;padding-left:1px;
 background:radial-gradient(ellipse 110px 20px at 75px 12px,#cfc9b4cc,transparent),radial-gradient(ellipse 22px 12px at 342px 14px,#b9b800,transparent),radial-gradient(ellipse 18px 12px at 415px 14px,#b99a42,transparent),radial-gradient(ellipse 22px 10px at 490px 19px,#c7a02b,transparent),radial-gradient(ellipse 60px 20px at 1100px 2px,#9c8c31,transparent),radial-gradient(ellipse 50px 20px at 1240px 2px,#d1c167,transparent),linear-gradient(90deg,#6a655a,#8a7b58 13%,#85794f 18%,#6a5633 22%,#54452b 27%,#81672f 35%,#a98744 44%,#9a7b38 55%,#a3843f 64%,#806326 73%,#5e4917 80%,#75591a 86%,#a28d45 90%,#8b7a34 100%)}
.appicon{width:16px;height:16px;margin:3px 4px 0 0}
.title-text{font-size:12.500px;line-height:21px;letter-spacing:.16px;text-shadow:0 0 6px #fff,0 0 8px #fff8}
.winbtns{margin-left:auto;width:104px;height:18px;display:flex;border:1px solid #d9cda0;border-top:0;border-radius:0 0 5px 5px;margin-right:2px;box-shadow:0 0 0 1px #4a3d1b;background:#b7a45c55}
.wb{width:28px;display:flex;align-items:center;justify-content:center;border-right:1px solid #d9cda0;padding-bottom:2px}
.wb.wide{width:47px;border:0}
.menu{height:27px;flex:none;display:flex;line-height:27px;padding-left:12px;white-space:nowrap}
.m1,.m2{width:54px}.m2{width:55px}.m3,.m4{width:56px}.m5{width:52px}.m6{width:55px}.m7{width:81px}.m8{width:68px}.m9{width:60px}
.bar{height:26px;flex:none;display:flex;align-items:center}
.bar1{padding-left:8px}.bar2{padding-left:5px}.bar3{padding-left:9px}
.grip{width:4px;height:16px;flex:none;background:linear-gradient(#b4b8bd 50%,transparent 50%) 1px 1px/2px 5px repeat-y}
.bar3 .grip{width:5px}
.i{width:16px;height:16px;margin:0 3px}
.sep{height:16px;flex:none;background:linear-gradient(#b5b9be,#b5b9be) center/1px 100% no-repeat}
.s5{width:5px}.s6{width:6px}.s7{width:7px}.s8{width:8px}
.dd{flex:none;width:10px;height:4px;background:#000;clip-path:polygon(1px 0,9px 0,5px 4px);transform:scale(.8)}
.w10{width:10px}.w11{width:11px}
.gray{background:#9a9c9e}
.combo{height:20px;flex:none;display:flex;align-items:center;justify-content:space-between;border:1px solid #c3c6ca;border-radius:2px;font:10px "Liberation Mono",monospace;padding:0 3px 2px 2px}
.scale{width:148px}
.pct{width:60px;color:#555;border-color:#aaaeb3;padding-bottom:0}
.btn{width:22px;height:22px;flex:none;display:flex;align-items:center;justify-content:center;border:1px solid #3399ff;background:#dbe9f8}
.btn .i{margin:0}
.btn.off{border-color:#9aa7b7;background:#e1e8f1}
.more{width:11px;height:23px;flex:none;margin-left:2px;align-self:flex-end;background:linear-gradient(#000,#000) 4px 14px/6px 1px no-repeat,linear-gradient(#e5e9ef,#a3a5a8);display:flex;align-items:flex-end;justify-content:center}
.more:after{content:"";width:6px;height:3px;margin:0 0 4px 2px;background:#000;clip-path:polygon(0 0,100% 0,50% 100%)}
.bar1 .more,.bar2 .more{margin-bottom:1px}
.dim{display:flex;align-items:center;color:#a9abad}
.light{opacity:.4}
.editor{display:flex;align-items:center;margin-left:442px}
.ed-label{width:58px;padding-left:4px;letter-spacing:-.1px;white-space:nowrap}
.editor .s7{margin-left:1px}
.editor .more{margin-bottom:-2px}
.work{height:578px;flex:none;margin-top:1px;display:flex;margin-bottom:22px}
.panel{flex:none;display:flex;flex-direction:column;height:577px}
.toolbox{width:185px;margin-right:4px}
.toc{width:198px;margin-right:6px}
.phead{height:22px;flex:none;line-height:23px;padding:0 5px 0 4px;display:flex;justify-content:space-between;align-items:center;color:#45494f;background:linear-gradient(90deg,#bccbdb,#d5e2f0);letter-spacing:.4px}
.phead.active{background:linear-gradient(90deg,#98b3d2,#b9d1ea);color:#000;letter-spacing:0;padding-right:4px}
.pctl{display:flex;gap:7px}
.frame{flex:1;min-height:0;border:1px solid #7f858f;background:#fff;display:flex;flex-direction:column}
.upper{flex:1;min-height:0;display:flex}
.tree{flex:1;min-width:0;overflow:hidden;white-space:nowrap;color:#222;padding-top:1px;background:repeating-linear-gradient(#fff 0 1px,transparent 1px 2px),linear-gradient(#555,#555) 12px 0/1px 100% no-repeat,linear-gradient(#555,#555) 31px 0/1px 100% no-repeat}
.tree li{height:20px;display:flex;align-items:center}
.tree svg{width:17px;height:16px}
.g{padding-left:27px;background:repeating-linear-gradient(90deg,#777 0 1px,transparent 1px 2px) 37px 10px/5px 1px no-repeat}
.g .pm{margin-right:5px}.g svg{margin-right:5px}
.t{padding-left:50px;background:repeating-linear-gradient(#777 0 1px,transparent 1px 2px) 50px 0/1px 100% no-repeat,repeating-linear-gradient(90deg,#777 0 1px,transparent 1px 2px) 50px 10px/11px 1px no-repeat}
.end{background-size:1px 10px,11px 1px}
.t svg{margin:0 2px 0 11px}
.t b{padding:0 2px}
.sel{background:#3399ff;color:#fff}
.pm{width:9px;height:9px;flex:none;border:1px solid #919191;border-radius:1px;background:linear-gradient(#2f4fa0,#2f4fa0) center/5px 1px no-repeat,#f7f7f7}
.plus{background:linear-gradient(#2f4fa0,#2f4fa0) center/5px 1px no-repeat,linear-gradient(#2f4fa0,#2f4fa0) center/1px 5px no-repeat,#f7f7f7}
.vs{width:17px;flex:none;background:#e5f5e3;display:flex;flex-direction:column}
.vs .down{margin-top:auto}
.ar{width:17px;height:17px;flex:none;background:#f1f2f2;display:flex;align-items:center;justify-content:center}
.ar:after{content:"";width:7px;height:4px;background:#333}
.up:after{clip-path:polygon(0 100%,50% 0,100% 100%)}
.down:after{clip-path:polygon(0 0,100% 0,50% 100%)}
.lf:after{width:4px;height:7px;clip-path:polygon(0 50%,100% 0,100% 100%)}
.rt:after{width:4px;height:7px;clip-path:polygon(0 0,100% 50%,0 100%)}
.thumb{flex:none;border:1px solid #72a467;border-radius:2px;display:flex;align-items:center;justify-content:center;box-shadow:inset 0 0 0 1px #f4fbf2;background:linear-gradient(90deg,#e8f6e4 50%,#cdeac2 50%)}
.thumb:after{content:"";width:8px;height:8px;background:repeating-linear-gradient(#7f8a7c 0 1px,#fff 1px 3px)}
.tb-v{width:15px;height:212px;margin-top:84px}
.tc-v{width:15px;height:179px;margin-left:0;margin-top:1px}
.hs{height:16px;flex:none;display:flex;background:#e5f5e3}
.tb-h{width:101px;height:15px;margin:0 0 0 2px}
.toolbox .hs .rt{margin-left:28px}
.toolbox .hs{width:165px}
.toc .hs .rt{margin-left:40px}
.corner{width:18px;background:#e9f1fb;flex:1}
.tb-h,.mh{background:linear-gradient(#e8f6e4 50%,#cdeac2 50%)}
.tb-h:after,.mh:after{background:repeating-linear-gradient(90deg,#7f8a7c 0 1px,#fff 1px 3px)}
.toctools{height:26px;flex:none;display:flex;align-items:center;padding-left:4px}
.toc .frame{width:198px}
.toc .vs{width:18px}
.layers{flex:1;min-width:0;overflow:hidden;white-space:nowrap;color:#222;padding:1px 0 0 1px;letter-spacing:.25px}
.layers li{height:20px;display:flex;align-items:center}
.root{padding-left:7px;font-weight:700;letter-spacing:0}
.root svg{width:17px;height:16px;margin:0 4px 0 6px}
.ly{padding-left:26px;letter-spacing:.15px}
.ck{width:11px;height:11px;margin:0 8px;border:1px solid #000;box-shadow:0 0 0 .5px #000;background:#fff;flex:none;display:flex}
.on:after{content:"";width:7px;height:4px;margin:1px;border:solid #000;border-width:0 0 2px 2px;transform:rotate(-48deg)}
.pt{margin-left:61px;background:#e9f1fb}
.dot{width:4px;height:4px;box-shadow:0 0 0 1px #111;transform:rotate(45deg)}
.red{background:#a00824}.green{background:#4a9a0a}
.lg{margin-left:57px;background:#e9f1fb;line-height:18px;width:140px;padding-bottom:1px}
.lg i{width:15px;height:11px;flex:none;border:1px solid #6e6e6e;margin:3px 3px 0 1px}
.nob i{border:0}
.lg .sel{height:17px;line-height:16px;padding:0 1px;outline:1px dotted #c50;outline-offset:-1px}
.view{width:950px;height:577px;flex:none;display:flex;flex-direction:column;border-top:2px solid #777c82;border-left:1px solid #777c82}
.canvas{width:932px;flex:none;padding:25px 0 0 134px;border-right:1px solid #d0d4d9}
.mapbox{width:663px;height:508px;display:grid}
.mapbox>*{grid-area:1/1}
.vs.wide{background:#f0f0f0}
.mv{width:14px;height:522px;margin-left:1px}
.viewbar{height:18px;flex:none;display:flex;align-items:center;background:#f0f0f0;border-top:1px solid #d0d4d9}
.vbtn{width:17px;height:15px;border:1px solid #555;border-radius:3px;display:flex;align-items:center;justify-content:center;background:#ddd}
.vpage{width:18px;display:flex;justify-content:center}
.vsep{width:1px;height:13px;background:#777}
.vref{width:26px;display:flex;justify-content:center}
.vpau{width:9px;display:flex;gap:2px;justify-content:center}
.vpau i{width:2px;height:7px;background:#1b5ba0}
.viewbar .lf{margin-left:4px}
.mh{width:818px;height:15px;margin-left:2px}
.viewbar .ar{height:16px}
.viewbar .rt{margin-left:2px}
.search{width:20px;height:54px;margin:1px 0 0 3px;border:1px solid #9a9da2;border-right:0;border-radius:4px 0 0 4px;padding:4px 0 0 1px;color:#555;background:#edf3fb}
.search span{display:block;writing-mode:vertical-rl;text-orientation:sideways;line-height:18px;margin-top:3px}
.task{height:40px;flex:none;display:flex;align-items:center;color:#fff;border-top:1px solid #77794d;
 background:radial-gradient(ellipse 110px 22px at 930px 12px,#6a4a14,transparent),radial-gradient(ellipse 90px 30px at 640px 25px,#5e4418,transparent),radial-gradient(ellipse 90px 14px at 790px 28px,#51370f,transparent),radial-gradient(ellipse 60px 14px at 1130px 10px,#5b3d10,transparent),radial-gradient(ellipse 60px 30px at 400px 15px,#4a3110,transparent),linear-gradient(90deg,#0d0b06,#15120a 20%,#33240f 32%,#33250d 48%,#2b2c0b 55%,#39270a 65%,#1b1606 76%,#241806 84%,#120c04)}
.orb{margin-left:8px}
.q1{margin-left:22px}.q2{margin-left:33px}.q3{margin-left:31px}.q4{margin-left:19px}.q5{margin-left:36px}
.tbn{width:58px;height:38px;flex:none;border:1px solid #b4ad9a;border-radius:3px;display:flex;align-items:center;justify-content:center;background:linear-gradient(#ffffff55,#ffffff22 50%,#ffffff11 55%,#ffffff44)}
.stack{width:50px;box-shadow:3px 0 0 -1px #47412f,4px 0 0 -1px #aaa48e,7px 0 0 -2px #47412f,8px 0 0 -2px #aaa48e}
.t1{margin-left:18px;margin-right:7px}
.t2{margin-left:16px;width:54px;margin-right:8px}
.hot{background:radial-gradient(#e5e2d5,#b6b09a 70%,#8e866c);border-color:#eee}
.last{margin-left:4px}
.tray{margin-left:auto;display:flex;align-items:center}
.ime{font:11px "Liberation Mono",monospace;width:20px;margin-bottom:4px}
.k1,.k2,.k3{margin-bottom:4px}
.k1{margin-left:1px}.k2{margin-left:7px}.k3{margin-left:9px}.k4{margin-left:21px}.k5{margin-left:13px}.k6{margin-left:10px}.k7{margin-left:8px}.k8{margin-left:9px}.k9{margin-left:8px}.k10{margin-left:9px}
.clock{width:96px;padding-right:9px;text-align:center;line-height:18px;font-size:12px}
```
FILE: relief.js
```js
const W = 663, H = 508, RW = 656, RH = 506;
const ctx = document.getElementById('relief').getContext('2d');

// Mean brightness of the terrain on a 14 x 11 grid
const tone = [
 [105,130,140,145,150,115,145, 70, 98,105, 92, 80, 50, 25],
 [125,150,138,125,150,130,140, 85, 80, 80, 95, 85, 80,105],
 [140,135,125,138,155,120, 90, 92, 88, 75, 88, 75, 70, 35],
 [135,120,130,130,120,100, 88, 82, 75, 75, 65, 75, 75, 38],
 [ 32, 60,100,120, 80, 88, 85, 78, 62, 80, 65, 78, 85, 62],
 [ 90, 98, 98, 62, 58, 70, 60, 80, 75, 78, 72, 80, 75, 70],
 [108, 92, 65, 75, 65, 85, 72, 80, 82, 65, 68, 90, 95, 80],
 [ 65, 84, 75, 68, 80, 70, 92, 88, 78, 62, 68, 90,112, 75],
 [ 65, 82, 74, 85, 90, 86, 50, 75, 90, 70, 64, 70, 80,105],
 [ 65, 66, 72, 76, 82, 66, 66, 94, 76, 72, 70, 80, 65,115],
 [ 76, 80, 80, 66, 65, 64, 75, 95, 55, 80, 85, 65,105, 30]
];
function hash(x, y, s) {
  let n = Math.imul(x | 0, 374761393) ^ Math.imul(y | 0, 668265263) ^ Math.imul(s, 974634777);
  n = Math.imul(n ^ (n >>> 13), 1274126177);
  return ((n ^ (n >>> 16)) >>> 0) / 4294967295;
}
function noise(x, y, s) {
  const i = Math.floor(x), j = Math.floor(y);
  let u = x - i, v = y - j;
  u = u * u * (3 - 2 * u); v = v * v * (3 - 2 * v);
  return (hash(i, j, s) * (1 - u) + hash(i + 1, j, s) * u) * (1 - v) +
         (hash(i, j + 1, s) * (1 - u) + hash(i + 1, j + 1, s) * u) * v;
}
function base(x, y) {
  const gx = Math.max(0, Math.min(12.999, x / 46.800 - .5)), gy = Math.max(0, Math.min(9.999, y / 46 - .5));
  const i = Math.floor(gx), j = Math.floor(gy), u = gx - i, v = gy - j;
  return (tone[j][i] * (1 - u) + tone[j][i + 1] * u) * (1 - v) + (tone[j + 1][i] * (1 - u) + tone[j + 1][i + 1] * u) * v;
}

// Valleys (dark) and ridges (light): colour, width, points in map units
const off = document.createElement('canvas');
off.width = W; off.height = H;
const o = off.getContext('2d');
o.fillStyle = '#808080';
o.fillRect(0, 0, W, H);
o.lineCap = o.lineJoin = 'round';
const strokes = [
 ['#303030',4,735,155,752,172,768,196,790,212,800,222],
 ['#303030',4,822,240,842,262,870,292,893,320,903,345,920,375,945,400,968,425,990,440],
 ['#2a2a2a',6,815,470,820,510,812,550,798,590],
 ['#484848',9,850,590,880,620,925,655],
 ['#484848',5,1015,540,1055,530,1075,570,1100,600],
 ['#303030',3,598,352,620,337,650,326,672,318],
 ['#333333',3,578,320,590,306,612,288],
 ['#383838',4,635,375,665,370,700,352,715,344],
 ['#383838',4,650,210,664,192,680,185],
 ['#c8c8c8',6,546,235,549,260,563,270],
 ['#c8c8c8',5,540,282,546,320,560,336,580,338],
 ['#b8b8b8',6,655,205,672,190,682,186],
 ['#b4b4b4',7,828,158,832,180,824,205,830,235,826,250],
 ['#a8a8a8',7,805,180,815,170,820,158],
 ['#bcbcbc',4,745,285,755,260,768,235,782,230,785,250,765,262,742,268],
 ['#d0d0d0',5,742,262,750,280,764,270,775,262],
 ['#b8b8b8',4,725,215,728,240,738,250],
 ['#a8a8a8',4,718,180,727,200,725,225],
 ['#b0b0b0',5,600,340,640,318,690,296,715,310],
 ['#a4a4a4',5,640,290,690,275,715,272],
 ['#a0a0a0',5,585,310,650,290,690,290],
 ['#b0b0b0',5,650,375,690,360,715,345],
 ['#c8c8c8',12,1112,660,1125,638,1138,610,1165,580],
 ['#b0b0b0',10,1155,560,1185,530],
 ['#b8b8b8',10,1125,202,1150,196,1175,206],
 ['#a4a4a4',6,990,165,1035,165,1064,180,1105,182],
 ['#303030',10,1145,290,1180,288],
 ['#222222',10,715,360,708,380,720,385],
 ['#b8b8b8',8,560,430,575,438,580,470],
 ['#a8a8a8',7,1140,400,1145,450,1150,500],
 ['#a4a4a4',8,1080,440,1060,500,1075,540],
 ['#404040',8,1130,475,1150,520],
 ['#303030',5,900,170,930,165],
 ['#262626',10,1045,330,1036,322]
];
o.filter = 'blur(1.500px)';
for (const [c, w, ...p] of strokes) {
  o.strokeStyle = c; o.lineWidth = w; o.beginPath();
  for (let k = 0; k < p.length; k += 2) {
    const jx = (hash(k, w, 5) - .5) * 4, jy = (hash(k, w, 6) - .5) * 4;
    o.lineTo(p[k] - 528 + jx, p[k + 1] - 155 + jy);
  }
  o.stroke();
}
const form = o.getImageData(0, 0, W, H).data;

const img = ctx.createImageData(W, H), T = 11.600;
for (let y = 0; y < H; y++) for (let x = 0; x < W; x++) {
  const k = (y * W + x) * 4;
  const right = y < 35 ? 651 : y < 130 ? 652 : y < 225 ? 653 : 656;
  const inside = x < right && y < (x > 605 ? 504 : RH) && !(y < 1 && x > 476);
  if (!inside) { img.data[k] = 255; img.data[k + 1] = 177; img.data[k + 2] = 177; img.data[k + 3] = 255; continue; }
  const bx = Math.floor(x / T), by = Math.floor(y / T);
  const b = base((bx + .5) * T, (by + .5) * T);
  const block = (hash(bx, by, 3) - .5) * 20 + (noise(bx / 2, by / 2, 7) - .5) * 36;
  const wx = noise(x / 65, y / 65, 11) * 70 + noise(x / 16, y / 16, 13) * 12;
  const wy = noise(x / 65, y / 65, 23) * 70 + noise(x / 16, y / 16, 29) * 12;
  const px = x + wx, py = y + wy;
  // Long axis leans north-east in the north-west sheet and runs down the slope elsewhere
  const lean = x < 250 && y < 240;
  const a = lean ? px * .5 + py * .87 : px * .9 + py * .3;
  const c = lean ? px * .87 - py * .5 : py * .9 - px * .3;
  const f1 = noise(a / 6, c / 20, 31) - .5;
  const f2 = noise(a / 2.500, c / 8, 53) - .5;
  const f3 = hash(x >> 1, y, 71) - .5;
  const jx = Math.round((noise(x / 7, y / 7, 81) - .5) * 6), jy = Math.round((noise(x / 7, y / 7, 83) - .5) * 6);
  const sx = Math.max(0, Math.min(W - 1, x + jx)), sy = Math.max(0, Math.min(H - 1, y + jy));
  let v = b + block + (f1 * 40 + f2 * 34 + f3 * 9) * (.4 + b / 150) + (form[(sy * W + sx) * 4] - 128) * .7 - 4;
  if (x > 600 && y > 452 && x - 600 > (505 - y) * .4) v = v * .4 + 14;
  v = Math.max(0, Math.min(235, v));
  img.data[k] = img.data[k + 1] = img.data[k + 2] = v;
  img.data[k + 3] = 255;
}
ctx.putImageData(img, 0, 0);
```
